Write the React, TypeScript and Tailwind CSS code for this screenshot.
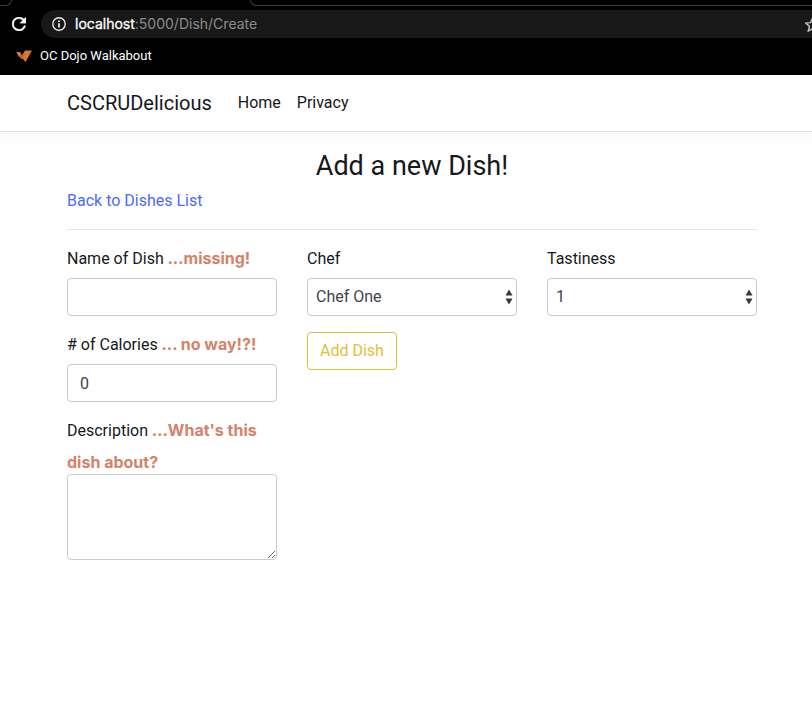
import React from "react";

function BrowserBar() {
  return (
    <div className="bg-black text-white">
      <div className="flex h-[6px]">
        <div className="w-3 rounded-br-lg border-r border-b border-[#3c3c3c]" />
        <div className="flex-none w-[238px]" />
        <div className="flex-1 rounded-bl-lg border-b border-l border-[#3c3c3c]" />
      </div>
      <div className="mt-1 flex h-7 items-center">
        <button type="button" aria-label="Reload" className="ml-[7px] flex size-6 items-center justify-center">
          <svg viewBox="4 4 16 16" className="size-[14px]" fill="#fff">
            <path d="M17.65 6.35A7.96 7.96 0 0 0 12 4a8 8 0 1 0 7.73 10h-2.08A6 6 0 1 1 12 6c1.66 0 3.14.69 4.22 1.78L13 11h7V4z" stroke="#fff" strokeWidth=".4" />
          </svg>
        </button>
        <div className="ml-[10px] flex h-7 flex-1 items-center overflow-hidden rounded-l-full bg-[#181818] pl-[11px]">
          <svg viewBox="0 0 14 14" className="size-[14px] flex-none" fill="none" stroke="#e8e8e8">
            <circle cx="7" cy="7" r="6.2" strokeWidth="1.4" />
            <path d="M7 6.2V10.4M7 3.5V5" strokeWidth="1.8" />
          </svg>
          <div className="ml-[9px] flex-1 whitespace-nowrap font-['Inter','Liberation_Sans',sans-serif] text-sm text-[#8c8c8c]">
            <span className="text-white [-webkit-text-stroke:0.3px_white]">localhost</span>:5000/Dish/Create
          </div>
          <div className="w-[7px] flex-none overflow-hidden">
            <svg viewBox="2 2 20 20" className="h-[15px] w-[15px] max-w-none" fill="none" stroke="#bdbdbd" strokeWidth="2">
              <path d="M12 3.5l2.6 6 6.4.6-4.900 4.200 1.500 6.400L12 17.300l-5.600 3.400 1.500-6.400L3 10.100l6.400-.6z" />
            </svg>
          </div>
        </div>
      </div>
      <div className="flex h-[37px] items-center px-4 pb-[2px]">
        <a href="#bookmark" className="flex items-center gap-2 text-[13px]">
          <svg viewBox="0 0 16 12" className="h-3 w-4" fill="#d9772b">
            <path d="M0.500 2 4 2 6 5.500 9 0.500 16 0.500 9.500 12 6.500 8.500 5 9 4 7 2.500 6.500z" />
            <path d="M4.500 5.500 6.500 8M6.500 5.500 5 7" stroke="#6b3a14" strokeWidth=".6" />
          </svg>
          OC Dojo Walkabout
        </a>
      </div>
    </div>
  );
}

const bodyFont = "font-['Roboto','Liberation_Sans',sans-serif]";
const control = `${bodyFont} w-full rounded border border-[#c9ccd4] bg-white text-[#40444c] outline-none`;

function Select({ id, options }: { id: string; options: string[] }) {
  return (
    <div className="relative">
      <select id={id} className={`${control} block h-[38px] appearance-none pl-2 pr-6`}>
        {options.map((o) => (
          <option key={o}>{o}</option>
        ))}
      </select>
      <svg viewBox="0 0 8 16" className="pointer-events-none absolute top-[11px] right-1 h-4 w-2" fill="#343a40">
        <path d="M4 0.500 7.500 6.500H0.500zM4 15.500 7.500 9.500H0.500z" />
      </svg>
    </div>
  );
}

function Field({ id, label, error, children }: { id: string; label: string; error?: string; children: React.ReactNode }) {
  return (
    <div className="mb-4 font-['Inter','Liberation_Sans',sans-serif]">
      <label htmlFor={id} className={`${bodyFont} mb-2 inline-block leading-[22px]`}>
        {label}
      </label>
      {error && <span className="font-bold text-[#d6826a]"> {error}</span>}
      {children}
    </div>
  );
}

export default function App() {
  return (
    <div className={`${bodyFont} min-h-screen bg-white text-base text-[#16181b]`}>
      <BrowserBar />
      <header className="border-b border-[#dee2e6] pl-3 shadow-[0_4px_12px_rgba(0,0,0,0.05)]">
        <nav className="mx-auto flex h-14 max-w-[690px] items-center">
          <a href="#brand" className="mr-[18px] text-xl">CSCRUDelicious</a>
          <a href="#home" className="px-2">Home</a>
          <a href="#privacy" className="px-2">Privacy</a>
        </nav>
      </header>
      <div className="pt-4 pl-3">
        <main className="mx-auto max-w-[690px]">
          <h2 className="mb-1 text-center text-[27px] leading-[37px]">Add a new Dish!</h2>
          <a href="#dishes" className="block text-[#4a6cf7]">Back to Dishes List</a>
          <hr className="my-4 border-[#e3e3e4]" />
          <form className="grid grid-cols-3 gap-[30px]" onSubmit={(e) => e.preventDefault()}>
            <div>
              <Field id="name" label="Name of Dish" error="...missing!">
                <input id="name" type="text" className={`${control} block h-[38px] px-3`} />
              </Field>
              <Field id="calories" label="# of Calories" error="... no way!?!">
                <input id="calories" type="text" defaultValue="0" className={`${control} block h-[38px] px-3`} />
              </Field>
              <Field id="description" label="Description" error="...What's this dish about?">
                <textarea id="description" rows={3} className={`${control} block h-[86px] px-3 py-[6px]`} />
              </Field>
            </div>
            <div>
              <Field id="chef" label="Chef">
                <Select id="chef" options={["Chef One", "Chef Two"]} />
              </Field>
              <button type="submit" className="h-[38px] rounded border border-[#e4bd3a] px-3 text-[#e4bd3a]">
                Add Dish
              </button>
            </div>
            <div>
              <Field id="tastiness" label="Tastiness">
                <Select id="tastiness" options={["1", "2", "3", "4", "5"]} />
              </Field>
            </div>
          </form>
        </main>
      </div>
    </div>
  );
}
